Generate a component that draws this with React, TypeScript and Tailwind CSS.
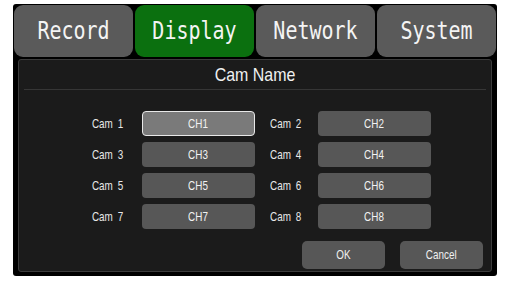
const tabs = [
  { label: 'Record', active: false },
  { label: 'Display', active: true },
  { label: 'Network', active: false },
  { label: 'System', active: false }
];

const rows = [
  ['Cam 1', 'CH1', 'Cam 2', 'CH2'],
  ['Cam 3', 'CH3', 'Cam 4', 'CH4'],
  ['Cam 5', 'CH5', 'Cam 6', 'CH6'],
  ['Cam 7', 'CH7', 'Cam 8', 'CH8']
];

// condensed look: Liberation Sans squeezed horizontally
function N({ children, origin = 'origin-center', wide }: { children: string; origin?: string; wide?: boolean }) {
  return (
    <span className={'inline-block whitespace-pre ' + (wide ? 'scale-x-[0.84] ' : 'scale-x-[0.76] ') + origin}>
      {children}
    </span>
  );
}

function ChButton({ label, selected }: { label: string; selected?: boolean }) {
  return (
    <div
      className={
        'w-[113px] h-[25px] rounded-[4px] flex items-center justify-center text-[13px] text-[#f2f2f2] ' +
        (selected ? 'bg-[#7a7a7a] border border-[#e8e8e8]' : 'bg-[#575757]')
      }
    >
      <N>{label}</N>
    </div>
  );
}

export default function App() {
  return (
    <div className="w-[510px] h-[286px] bg-white pt-[4px] pl-[13px]">
      <div className="w-[484px] h-[272px] bg-black rounded-[3px] flex flex-col">
        <div className="grid grid-cols-4 gap-[2px] px-[1px] pt-[1px]">
          {tabs.map((t) => (
            <div
              key={t.label}
              className={
                'h-[52px] rounded-[9px] flex items-center justify-center text-[#f4f4f4] text-[20px] font-["DejaVu_Sans_Mono",monospace] ' +
                (t.active ? 'bg-[#0b700f]' : 'bg-[#5a5a5a]')
              }
            >
              <span className="scale-y-[1.2] inline-block">{t.label}</span>
            </div>
          ))}
        </div>
        <div className="mx-[5px] mt-[2px] mb-[4px] flex-1 bg-[#1b1b1b] border border-[#3c3c3c] rounded-[3px] flex flex-col font-['Liberation_Sans',Arial,sans-serif]">
          <div className="h-[29px] flex items-center justify-center text-[19px] text-[#f0f0f0] pt-[2px]">
            <N wide>Cam Name</N>
          </div>
          <div className="mx-[5px] h-px bg-[#363636]" />
          <div className="flex flex-col gap-[6px] mt-[21px]">
            {rows.map((r, i) => (
              <div key={i} className="flex items-center h-[25px] text-[13px] text-[#e8e8e8]">
                <div className="w-[105px] text-right pr-px whitespace-nowrap">
                  <N origin="origin-right">{r[0].replace(' ', '\u2002')}</N>
                </div>
                <div className="ml-[18px]">
                  <ChButton label={r[1]} selected={i === 0} />
                </div>
                <div className="ml-[15px] w-[33px] whitespace-nowrap">
                  <N origin="origin-left">{r[2].replace(' ', '\u2002')}</N>
                </div>
                <div className="ml-[15px]">
                  <ChButton label={r[3]} />
                </div>
              </div>
            ))}
          </div>
          <div className="flex justify-end gap-[15px] mt-[12px] pr-[8px]">
            <div className="w-[83px] h-[28px] rounded-[5px] bg-[#575757] flex items-center justify-center text-[13px] text-[#f0f0f0]">
              <N>OK</N>
            </div>
            <div className="w-[83px] h-[28px] rounded-[5px] bg-[#575757] flex items-center justify-center text-[13px] text-[#f0f0f0]">
              <N>Cancel</N>
            </div>
          </div>
        </div>
      </div>
    </div>
  );
}
